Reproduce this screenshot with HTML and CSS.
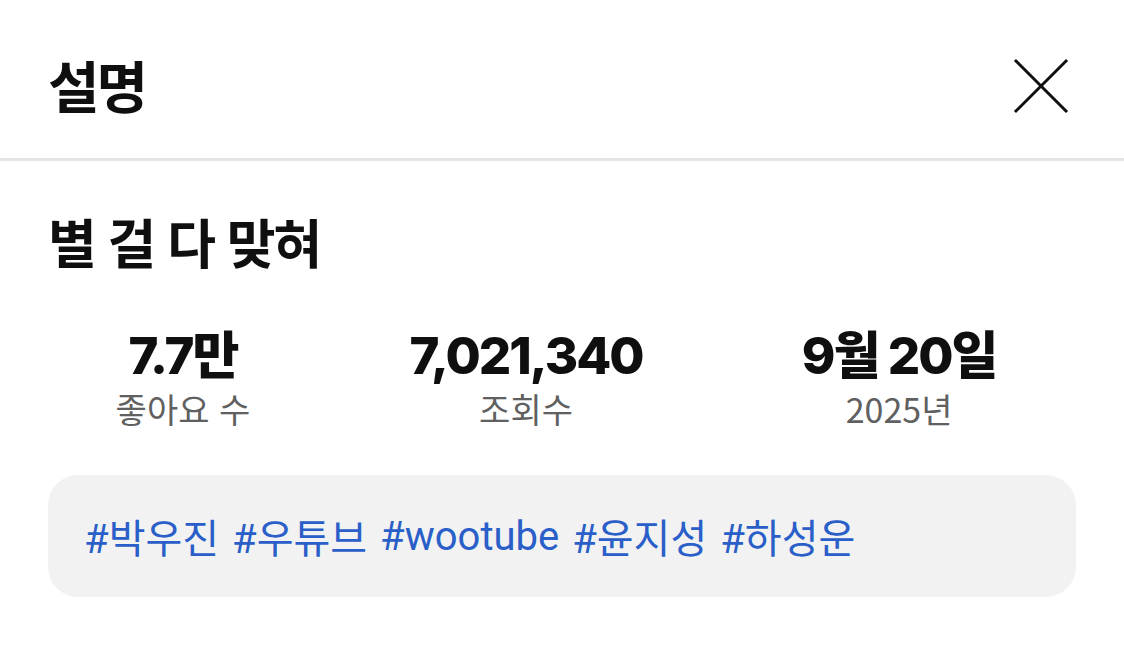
FILE: index.html
```html
<!DOCTYPE html>
<html lang="ko">
<head>
  <meta charset="UTF-8" />
  <meta name="viewport" content="width=device-width, initial-scale=1.0"/>
  <title>설명</title>
  <link rel="stylesheet" href="styles.css">
</head>
<body>

  <div class="sheet">
    <div class="sheet-header">
      <h1>설명</h1>
      <button class="close-btn" aria-label="닫기">
        <svg width="56" height="56" viewBox="0 0 56 56">
          <path d="M3 3 L53 53 M53 3 L3 53" stroke="#0f0f0f" stroke-width="3" stroke-linecap="square" fill="none"/>
        </svg>
      </button>
    </div>

    <div class="content">
      <h2 class="video-title">별 걸 다 맞혀</h2>

      <div class="stats">
        <div class="stat">
          <div class="stat-value">7.7만</div>
          <div class="stat-label">좋아요 수</div>
        </div>
        <div class="stat">
          <div class="stat-value">7,021,340</div>
          <div class="stat-label">조회수</div>
        </div>
        <div class="stat">
          <div class="stat-value">9월 20일</div>
          <div class="stat-label">2025년</div>
        </div>
      </div>

      <div class="tags">
        <a href="#">#박우진</a> <a href="#">#우튜브</a> <a href="#">#wootube</a> <a href="#">#윤지성</a> <a href="#">#하성운</a>
      </div>
    </div>
  </div>

</body>
</html>
```

FILE: styles.css
```css
* {
  margin: 0;
  padding: 0;
  box-sizing: border-box;
}

body {
  background-color: white;
  font-family: Inter, "Noto Sans CJK KR", sans-serif;
  color: #0f0f0f;
}

.sheet-header {
  height: 161px;
  display: flex;
  align-items: center;
  justify-content: space-between;
  padding: 0 48px 0 48px;
  border-bottom: 3px solid #e5e5e5;
}

.sheet-header h1 {
  font-family: "Noto Sans CJK KR", sans-serif;
  font-size: 56px;
  font-weight: 700;
  letter-spacing: -3px;
  line-height: 64px;
  margin-top: 10px;
}

.close-btn {
  background: none;
  border: none;
  width: 56px;
  height: 56px;
  margin-top: 14px;
  margin-right: 7px;
  cursor: pointer;
}

.content {
  padding: 0 48px;
}

.video-title {
  font-family: "Noto Sans CJK KR", sans-serif;
  font-size: 53px;
  font-weight: 700;
  letter-spacing: -2px;
  line-height: 60px;
  margin-top: 50px;
}

.stats {
  display: flex;
  justify-content: space-around;
  margin-top: 58px;
  margin-left: -12px;
}

.stat {
  display: flex;
  flex-direction: column;
  align-items: center;
}

.stat-value {
  font-family: Inter, "Noto Sans CJK KR", sans-serif;
  font-size: 51px;
  font-weight: 800;
  letter-spacing: -2px;
  line-height: 54px;
}

.stat-label {
  font-family: "Noto Sans CJK KR", sans-serif;
  font-size: 34px;
  color: #606060;
  line-height: 40px;
  margin-top: 6px;
}

.tags {
  margin-top: 46px;
  background-color: #f2f2f2;
  border-radius: 30px;
  height: 122px;
  padding: 0 36px;
  display: flex;
  align-items: center;
  gap: 13px;
  font-family: Roboto, "Noto Sans CJK KR", sans-serif;
  font-size: 40px;
}

.tags a {
  color: #2a5ec8;
  text-decoration: none;
}
```
